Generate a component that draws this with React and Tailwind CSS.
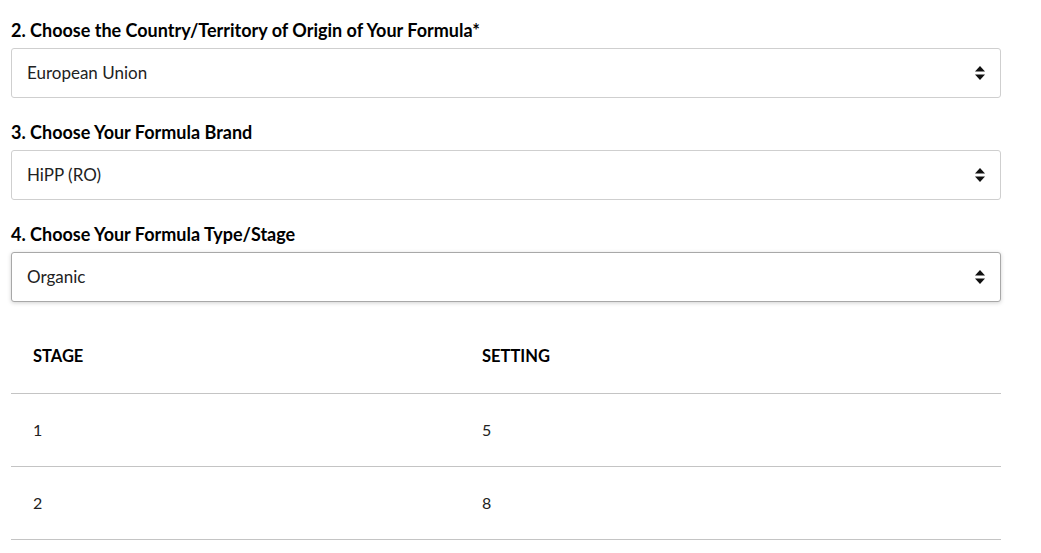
import React from 'react';

const Arrows = () => (
  <svg width="10" height="14" viewBox="0 0 10 14" className="shrink-0">
    <path d="M5 0 L10 5.5 L0 5.5 Z" fill="#111" />
    <path d="M0 8.5 L10 8.5 L5 14 Z" fill="#111" />
  </svg>
);

const Field = ({ label, value, focused }) => (
  <div>
    <label className="block text-[18px] font-bold leading-6 text-black">{label}</label>
    <div
      className={`mt-[6px] h-[50px] flex items-center justify-between pl-[15px] pr-[15px] bg-white rounded-[3px] border ${
        focused ? 'border-[#a8a8a8] shadow-[0_1px_4px_rgba(0,0,0,0.18)]' : 'border-[#cfcfcf]'
      }`}
    >
      <span className="text-[17px] text-[#222]">{value}</span>
      <Arrows />
    </div>
  </div>
);

const rows = [
  { stage: '1', setting: '5' },
  { stage: '2', setting: '8' },
];

export default function App() {
  return (
    <div className="bg-white min-h-screen pt-[18px] pl-[11px]" style={{ fontFamily: 'Lato, "Open Sans", sans-serif' }}>
      <div className="w-[990px] flex flex-col gap-[22px]">
        <Field label="2. Choose the Country/Territory of Origin of Your Formula*" value="European Union" />
        <Field label="3. Choose Your Formula Brand" value="HiPP (RO)" />
        <Field label="4. Choose Your Formula Type/Stage" value="Organic" focused />
      </div>
      <table className="w-[990px] mt-[19px] border-collapse text-[16px] text-[#222]">
        <thead>
          <tr className="h-[72px] border-b border-[#c4c4c4]">
            <th className="w-[449px] text-left pl-[22px] text-[16.5px] font-bold text-black">STAGE</th>
            <th className="text-left pl-[22px] text-[16.5px] font-bold text-black">SETTING</th>
          </tr>
        </thead>
        <tbody>
          {rows.map((r) => (
            <tr key={r.stage} className="h-[73px] border-b border-[#c4c4c4]">
              <td className="pl-[22px]">{r.stage}</td>
              <td className="pl-[22px]">{r.setting}</td>
            </tr>
          ))}
        </tbody>
      </table>
    </div>
  );
}
